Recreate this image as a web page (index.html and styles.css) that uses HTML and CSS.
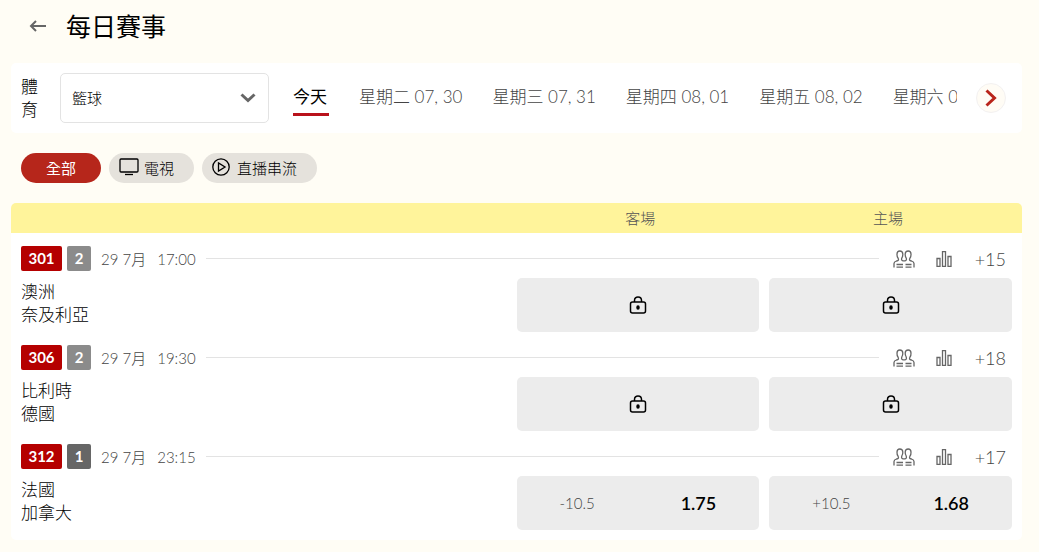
FILE: index.html
```html
<!DOCTYPE html>
<html lang="zh-Hant">
<head>
  <meta charset="UTF-8" />
  <meta name="viewport" content="width=device-width, initial-scale=1.0"/>
  <title>每日賽事</title>
  <link rel="stylesheet" href="styles.css">
</head>
<body>
  <!-- shared icons -->
  <svg class="sprite" aria-hidden="true">
    <symbol id="icon-people" viewBox="0 0 22 18">
      <path d="M1 17.500V13.500C1 12 2 11.500 3.500 11C5.500 10.500 6 10 5 8C4.200 7 3.900 6 4 4C4.100 2 5.200 1 6.800 1C8.500 1 9.700 2 9.800 4C9.900 6 9.500 7 8.800 8C8.200 10 8.800 10.500 10 10.800C10.700 11 11.300 11 12 10.800C13.200 10.500 13.800 10 13.200 8C12.500 7 12.100 6 12.200 4C12.300 2 13.500 1 15.200 1C16.800 1 17.900 2 18 4C18.100 6 17.800 7 17 8C16 10 16.500 10.500 18.500 11C20 11.500 21 12 21 13.500V17.500M3.500 14.500H10M12.500 14.500H18.500M3.500 17.200H10M12.500 17.200H18.500"/>
    </symbol>
    <symbol id="icon-stats" viewBox="0 0 16 16">
      <path d="M1 7.500H4V15.300H1ZM6.500 0.700H9.500V15.300H6.500ZM12 5.500H15V15.300H12Z"/>
    </symbol>
    <symbol id="icon-lock" viewBox="0 0 18 20">
      <rect x="1.500" y="7" width="15" height="11" rx="2"/>
      <path d="M5.500 7V5.500C5.500 3.200 7 2 9 2S12.500 3.200 12.500 5.500V7"/>
      <ellipse class="keyhole" cx="9" cy="12.500" rx="1" ry="1.500"/>
    </symbol>
  </svg>

  <header class="page-header">
    <a class="back" href="#" aria-label="返回">
      <svg width="18" height="14" viewBox="0 0 18 14"><path d="M17 7H2M7 2L2 7L7 12"/></svg>
    </a>
    <h1>每日賽事</h1>
  </header>

  <main>
    <section class="filter-bar">
      <label class="sport-label" for="sport">體育</label>
      <div class="select-box">
        <select id="sport">
          <option>籃球</option>
        </select>
        <svg class="caret" width="16" height="10" viewBox="0 0 16 10"><path d="M1.500 1.500L8 7.500L14.500 1.500"/></svg>
      </div>
      <nav class="days">
        <a class="day active" href="#">今天</a>
        <a class="day" href="#">星期二 07, 30</a>
        <a class="day" href="#">星期三 07, 31</a>
        <a class="day" href="#">星期四 08, 01</a>
        <a class="day" href="#">星期五 08, 02</a>
        <a class="day" href="#">星期六 08, 03</a>
      </nav>
      <button class="next" aria-label="下一頁">
        <svg width="12" height="18" viewBox="0 0 12 18"><path d="M1.500 1.500L9.500 9L1.500 16.500"/></svg>
      </button>
    </section>

    <div class="chips">
      <button class="chip selected">全部</button>
      <button class="chip">
        <svg width="20" height="18" viewBox="0 0 20 18"><rect x="1" y="1" width="18" height="13" rx="1"/><path d="M6 16.500H14"/></svg>
        電視
      </button>
      <button class="chip">
        <svg width="20" height="18" viewBox="0 0 20 18"><circle cx="9" cy="9" r="8.200"/><path d="M6.500 5V13L13 9Z"/></svg>
        直播串流
      </button>
    </div>

    <section class="events">
      <div class="events-head">
        <span></span>
        <span>客場</span>
        <span>主場</span>
      </div>

      <article class="event">
        <div class="event-info">
          <span class="badge code">301</span>
          <span class="badge">2</span>
          <span class="date">29 7月</span>
          <time>17:00</time>
          <span class="line"></span>
          <svg class="icon people"><use href="#icon-people"/></svg>
          <svg class="icon stats"><use href="#icon-stats"/></svg>
          <a class="more" href="#">+15</a>
        </div>
        <div class="event-odds">
          <div class="teams">澳洲<br>奈及利亞</div>
          <button class="odd" aria-label="客場"><svg class="lock"><use href="#icon-lock"/></svg></button>
          <button class="odd" aria-label="主場"><svg class="lock"><use href="#icon-lock"/></svg></button>
        </div>
      </article>

      <article class="event">
        <div class="event-info">
          <span class="badge code">306</span>
          <span class="badge">2</span>
          <span class="date">29 7月</span>
          <time>19:30</time>
          <span class="line"></span>
          <svg class="icon people"><use href="#icon-people"/></svg>
          <svg class="icon stats"><use href="#icon-stats"/></svg>
          <a class="more" href="#">+18</a>
        </div>
        <div class="event-odds">
          <div class="teams">比利時<br>德國</div>
          <button class="odd" aria-label="客場"><svg class="lock"><use href="#icon-lock"/></svg></button>
          <button class="odd" aria-label="主場"><svg class="lock"><use href="#icon-lock"/></svg></button>
        </div>
      </article>

      <article class="event">
        <div class="event-info">
          <span class="badge code">312</span>
          <span class="badge dark">1</span>
          <span class="date">29 7月</span>
          <time>23:15</time>
          <span class="line"></span>
          <svg class="icon people"><use href="#icon-people"/></svg>
          <svg class="icon stats"><use href="#icon-stats"/></svg>
          <a class="more" href="#">+17</a>
        </div>
        <div class="event-odds">
          <div class="teams">法國<br>加拿大</div>
          <button class="odd"><span class="spread">-10.5</span><b>1.75</b></button>
          <button class="odd"><span class="spread">+10.5</span><b>1.68</b></button>
        </div>
      </article>
    </section>
  </main>
</body>
</html>
```

FILE: styles.css
```css
* {
  box-sizing: border-box;
}
body {
  margin: 0;
  padding: 0 17px 11px 11px;
  background: #fffdf5;
  color: #000;
  font-family: Lato, "Noto Sans CJK TC", sans-serif;
  font-size: 15px;
  font-weight: 300;
}
a {
  color: inherit;
  text-decoration: none;
}
button, select {
  font: inherit;
  color: inherit;
  border: 0;
  cursor: pointer;
}
svg {
  fill: none;
  stroke: currentColor;
  flex: none;
}
.sprite {
  display: none;
}

.page-header {
  display: flex;
  align-items: center;
  gap: 19px;
  height: 52px;
  padding-left: 18px;
}
.back {
  display: flex;
  color: #666;
  stroke-width: 2;
}
h1 {
  margin: 0;
  font-size: 25px;
  font-weight: 400;
  line-height: 32px;
}

.filter-bar {
  display: flex;
  align-items: center;
  height: 70px;
  margin-top: 11px;
  padding: 0 16px 0 10px;
  background: #fff;
  border-radius: 5px;
}
.sport-label {
  width: 18px;
  margin-right: 21px;
  font-size: 17px;
  line-height: 23px;
}
.select-box {
  position: relative;
  width: 209px;
  flex: none;
}
.select-box select {
  appearance: none;
  width: 100%;
  height: 50px;
  padding: 0 11px;
  background: #fff;
  border: 1px solid #e3e3e3;
  border-radius: 5px;
}
.caret {
  position: absolute;
  right: 13px;
  top: 20px;
  color: #666;
  stroke-width: 3;
  pointer-events: none;
}
.days {
  display: flex;
  gap: 30px;
  flex: 1;
  min-width: 0;
  margin: 0 19px 0 24px;
  overflow: hidden;
}
.day {
  padding: 4px 0 3px;
  border-bottom: 3px solid transparent;
  color: #444;
  font-size: 17px;
  line-height: 26px;
  white-space: nowrap;
}
.day.active {
  min-width: 36px;
  color: #000;
  font-weight: 400;
  border-color: #b9121b;
}
.next {
  display: flex;
  align-items: center;
  justify-content: center;
  width: 30px;
  height: 30px;
  padding: 0;
  background: #fffcf5;
  border: 1px solid #f3f1f1;
  border-radius: 50%;
  color: #b9241a;
  stroke-width: 3;
}

.chips {
  display: flex;
  gap: 8px;
  padding: 20px 10px;
}
.chip {
  display: flex;
  align-items: center;
  gap: 5px;
  height: 30px;
  padding: 0 20px 2px 10px;
  background: #e5e2dc;
  border-radius: 15px;
  stroke-width: 1.3;
}
.chip.selected {
  padding: 0 25px 2px;
  background: #b6261b;
  color: #fff;
  font-weight: 400;
}

.events {
  background: #fff;
  border-radius: 5px;
  overflow: hidden;
}
.events-head {
  display: grid;
  grid-template-columns: 2fr 1fr 1fr;
  padding: 0 10px;
  background: #fff49b;
  color: #555;
  line-height: 30px;
  text-align: center;
}
.event {
  padding: 13px 10px 0;
}
.event:last-child {
  padding-bottom: 10px;
}
.event-info {
  display: flex;
  align-items: center;
  height: 25px;
  padding-right: 6px;
  color: #444;
}
.badge {
  width: 24px;
  margin-right: 5px;
  background: #8b8b8b;
  border-radius: 2px;
  color: #fff;
  font-weight: 700;
  line-height: 25px;
  text-align: center;
}
.badge.code {
  width: 41px;
  background: #b50000;
}
.badge.dark {
  background: #666;
}
.date {
  margin: 0 11px 0 5px;
}
.line {
  flex: 1;
  height: 1px;
  margin: 0 14px 0 10px;
  background: #e3e3e3;
}
.icon {
  color: #666;
  stroke-width: 1.3;
}
.icon.people {
  width: 22px;
  height: 18px;
  margin-right: 21px;
}
.icon.stats {
  width: 16px;
  height: 16px;
  margin-right: 23px;
}
.more {
  font-size: 18px;
  line-height: 24px;
}
.event-odds {
  display: grid;
  grid-template-columns: 2fr 1fr 1fr;
  gap: 10px;
  margin-top: 7px;
}
.teams {
  padding-top: 2px;
  font-size: 17px;
  line-height: 23px;
}
.odd {
  display: flex;
  align-items: center;
  justify-content: space-between;
  height: 54px;
  padding: 0 43px;
  background: #ececec;
  border-radius: 5px;
}
.spread {
  color: #444;
}
.odd b {
  font-size: 18px;
  font-weight: 600;
}
.lock {
  width: 18px;
  height: 20px;
  margin: 0 auto;
  stroke-width: 1.5;
}
.keyhole {
  fill: currentColor;
}
```
